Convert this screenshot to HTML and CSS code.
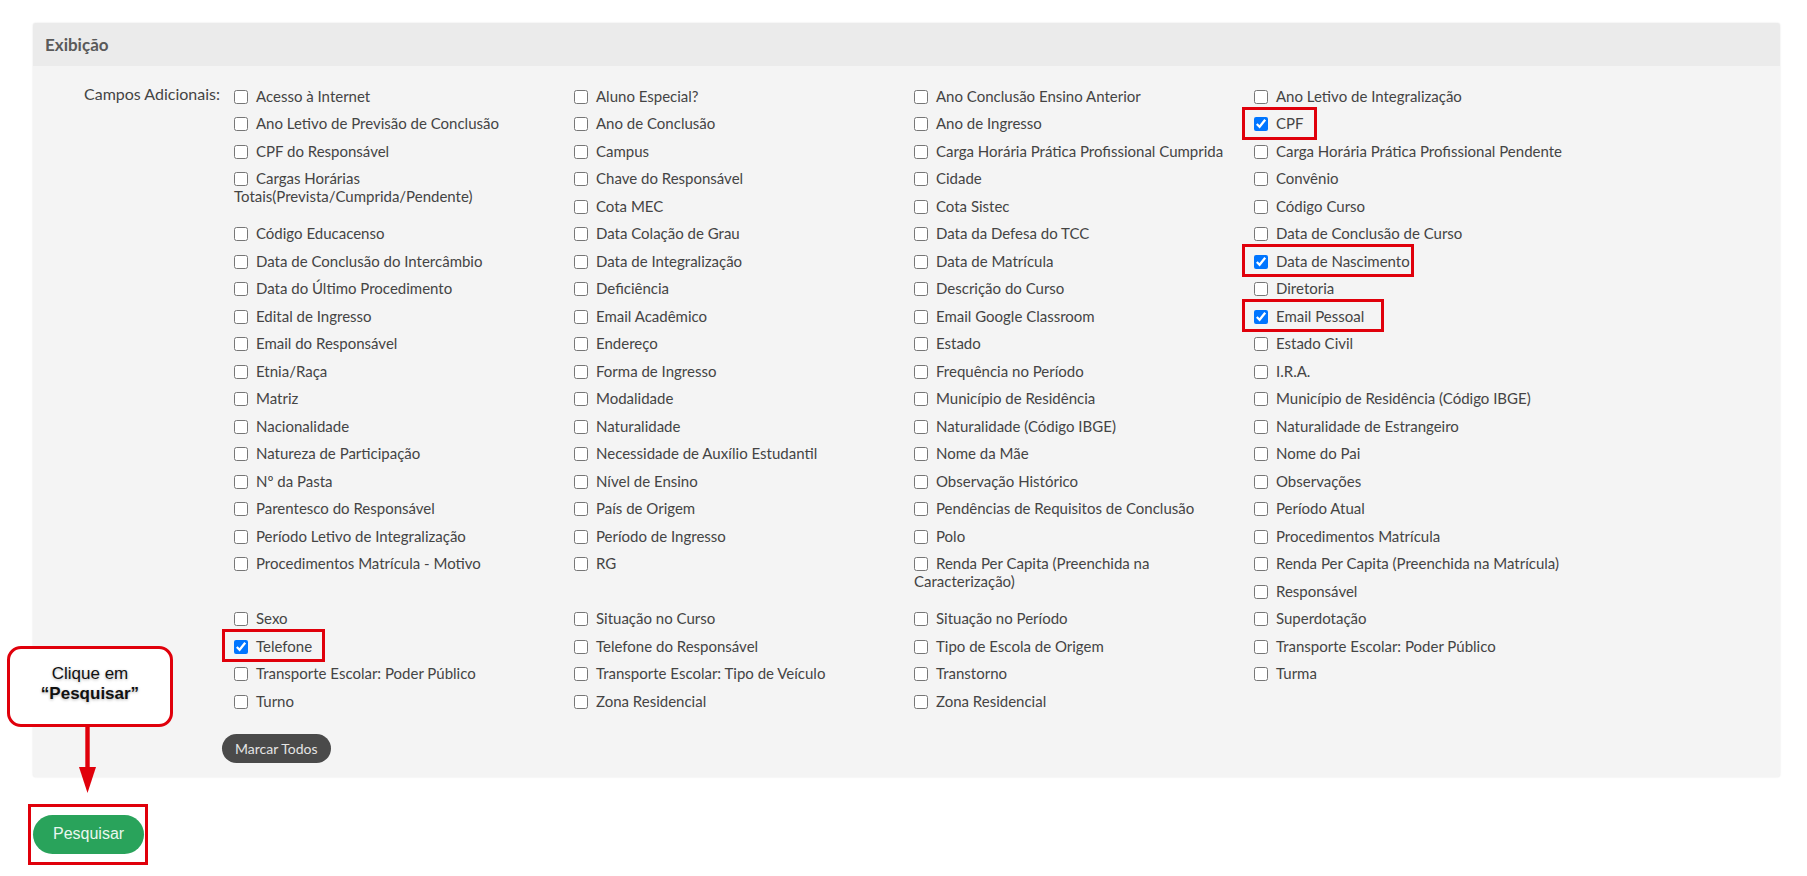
FILE: index.html
```html
<!DOCTYPE html>
<html lang="pt-BR">
<head>
<meta charset="utf-8">
<title>Exibição</title>
<link rel="stylesheet" href="styles.css">
</head>
<body>
<main class="page">
  <section class="panel">
    <header class="panel-header">Exibição</header>
    <div class="panel-body">
      <div class="field-label">Campos Adicionais:</div>
      <div class="field-control">
        <div class="options">
          <div class="opt"><label><input type="checkbox">Acesso à Internet</label></div>
          <div class="opt"><label><input type="checkbox">Aluno Especial?</label></div>
          <div class="opt"><label><input type="checkbox">Ano Conclusão Ensino Anterior</label></div>
          <div class="opt"><label><input type="checkbox">Ano Letivo de Integralização</label></div>
          <div class="opt"><label><input type="checkbox">Ano Letivo de Previsão de Conclusão</label></div>
          <div class="opt"><label><input type="checkbox">Ano de Conclusão</label></div>
          <div class="opt"><label><input type="checkbox">Ano de Ingresso</label></div>
          <div class="opt hl"><label><input type="checkbox" checked>CPF</label></div>
          <div class="opt"><label><input type="checkbox">CPF do Responsável</label></div>
          <div class="opt"><label><input type="checkbox">Campus</label></div>
          <div class="opt"><label><input type="checkbox">Carga Horária Prática Profissional Cumprida</label></div>
          <div class="opt"><label><input type="checkbox">Carga Horária Prática Profissional Pendente</label></div>
          <div class="opt"><label><input type="checkbox">Cargas Horárias Totais(Prevista/Cumprida/Pendente)</label></div>
          <div class="opt"><label><input type="checkbox">Chave do Responsável</label></div>
          <div class="opt"><label><input type="checkbox">Cidade</label></div>
          <div class="opt"><label><input type="checkbox">Convênio</label></div>
          <div class="opt"><label><input type="checkbox">Cota MEC</label></div>
          <div class="opt"><label><input type="checkbox">Cota Sistec</label></div>
          <div class="opt"><label><input type="checkbox">Código Curso</label></div>
          <div class="opt"><label><input type="checkbox">Código Educacenso</label></div>
          <div class="opt"><label><input type="checkbox">Data Colação de Grau</label></div>
          <div class="opt"><label><input type="checkbox">Data da Defesa do TCC</label></div>
          <div class="opt"><label><input type="checkbox">Data de Conclusão de Curso</label></div>
          <div class="opt"><label><input type="checkbox">Data de Conclusão do Intercâmbio</label></div>
          <div class="opt"><label><input type="checkbox">Data de Integralização</label></div>
          <div class="opt"><label><input type="checkbox">Data de Matrícula</label></div>
          <div class="opt hl hl-tight"><label><input type="checkbox" checked>Data de Nascimento</label></div>
          <div class="opt"><label><input type="checkbox">Data do Último Procedimento</label></div>
          <div class="opt"><label><input type="checkbox">Deficiência</label></div>
          <div class="opt"><label><input type="checkbox">Descrição do Curso</label></div>
          <div class="opt"><label><input type="checkbox">Diretoria</label></div>
          <div class="opt"><label><input type="checkbox">Edital de Ingresso</label></div>
          <div class="opt"><label><input type="checkbox">Email Acadêmico</label></div>
          <div class="opt"><label><input type="checkbox">Email Google Classroom</label></div>
          <div class="opt hl hl-wide"><label><input type="checkbox" checked>Email Pessoal</label></div>
          <div class="opt"><label><input type="checkbox">Email do Responsável</label></div>
          <div class="opt"><label><input type="checkbox">Endereço</label></div>
          <div class="opt"><label><input type="checkbox">Estado</label></div>
          <div class="opt"><label><input type="checkbox">Estado Civil</label></div>
          <div class="opt"><label><input type="checkbox">Etnia/Raça</label></div>
          <div class="opt"><label><input type="checkbox">Forma de Ingresso</label></div>
          <div class="opt"><label><input type="checkbox">Frequência no Período</label></div>
          <div class="opt"><label><input type="checkbox">I.R.A.</label></div>
          <div class="opt"><label><input type="checkbox">Matriz</label></div>
          <div class="opt"><label><input type="checkbox">Modalidade</label></div>
          <div class="opt"><label><input type="checkbox">Município de Residência</label></div>
          <div class="opt"><label><input type="checkbox">Município de Residência (Código IBGE)</label></div>
          <div class="opt"><label><input type="checkbox">Nacionalidade</label></div>
          <div class="opt"><label><input type="checkbox">Naturalidade</label></div>
          <div class="opt"><label><input type="checkbox">Naturalidade (Código IBGE)</label></div>
          <div class="opt"><label><input type="checkbox">Naturalidade de Estrangeiro</label></div>
          <div class="opt"><label><input type="checkbox">Natureza de Participação</label></div>
          <div class="opt"><label><input type="checkbox">Necessidade de Auxílio Estudantil</label></div>
          <div class="opt"><label><input type="checkbox">Nome da Mãe</label></div>
          <div class="opt"><label><input type="checkbox">Nome do Pai</label></div>
          <div class="opt"><label><input type="checkbox">Nº da Pasta</label></div>
          <div class="opt"><label><input type="checkbox">Nível de Ensino</label></div>
          <div class="opt"><label><input type="checkbox">Observação Histórico</label></div>
          <div class="opt"><label><input type="checkbox">Observações</label></div>
          <div class="opt"><label><input type="checkbox">Parentesco do Responsável</label></div>
          <div class="opt"><label><input type="checkbox">País de Origem</label></div>
          <div class="opt"><label><input type="checkbox">Pendências de Requisitos de Conclusão</label></div>
          <div class="opt"><label><input type="checkbox">Período Atual</label></div>
          <div class="opt"><label><input type="checkbox">Período Letivo de Integralização</label></div>
          <div class="opt"><label><input type="checkbox">Período de Ingresso</label></div>
          <div class="opt"><label><input type="checkbox">Polo</label></div>
          <div class="opt"><label><input type="checkbox">Procedimentos Matrícula</label></div>
          <div class="opt"><label><input type="checkbox">Procedimentos Matrícula - Motivo</label></div>
          <div class="opt"><label><input type="checkbox">RG</label></div>
          <div class="opt"><label><input type="checkbox">Renda Per Capita (Preenchida na Caracterização)</label></div>
          <div class="opt"><label><input type="checkbox">Renda Per Capita (Preenchida na Matrícula)</label></div>
          <div class="opt"><label><input type="checkbox">Responsável</label></div>
          <div class="opt"><label><input type="checkbox">Sexo</label></div>
          <div class="opt"><label><input type="checkbox">Situação no Curso</label></div>
          <div class="opt"><label><input type="checkbox">Situação no Período</label></div>
          <div class="opt"><label><input type="checkbox">Superdotação</label></div>
          <div class="opt hl"><label><input type="checkbox" checked>Telefone</label></div>
          <div class="opt"><label><input type="checkbox">Telefone do Responsável</label></div>
          <div class="opt"><label><input type="checkbox">Tipo de Escola de Origem</label></div>
          <div class="opt"><label><input type="checkbox">Transporte Escolar: Poder Público</label></div>
          <div class="opt"><label><input type="checkbox">Transporte Escolar: Poder Público</label></div>
          <div class="opt"><label><input type="checkbox">Transporte Escolar: Tipo de Veículo</label></div>
          <div class="opt"><label><input type="checkbox">Transtorno</label></div>
          <div class="opt"><label><input type="checkbox">Turma</label></div>
          <div class="opt"><label><input type="checkbox">Turno</label></div>
          <div class="opt"><label><input type="checkbox">Zona Residencial</label></div>
          <div class="opt"><label><input type="checkbox">Zona Residencial</label></div>
        </div>
        <button type="button" class="btn-dark">Marcar Todos</button>
      </div>
    </div>
  </section>
  <div class="actions">
    <div class="mark"><button type="submit" class="btn-success">Pesquisar</button></div>
  </div>
</main>

<div class="callout">Clique em<br><b>“Pesquisar”</b></div>
<svg class="arrow" width="19" height="70" viewBox="0 0 19 70" aria-hidden="true">
  <rect x="7.3" y="0" width="4.4" height="46" fill="#e0000b"/>
  <polygon points="1,42 18,42 9.5,68" fill="#e0000b"/>
</svg>
</body>
</html>
```

FILE: styles.css
```css
* {
  box-sizing: border-box;
}

body {
  margin: 0;
  font-family: Lato, "Open Sans", "Liberation Sans", sans-serif;
  color: #444;
  background: #fff;
}

.page {
  padding: 23px 27px 12px 33px;
}

.panel {
  background: #f4f4f4;
  border-radius: 3px;
  box-shadow: 0 0 2px rgba(0, 0, 0, 0.12);
}

.panel-header {
  height: 43px;
  padding-left: 12px;
  background: #ebebeb;
  border-radius: 3px 3px 0 0;
  font-size: 17px;
  font-weight: 700;
  line-height: 43px;
  color: #5a5a5a;
}

.panel-body {
  display: flex;
  padding: 16px 0 13.5px;
}

.field-label {
  flex: none;
  width: 189px;
  padding: 3px 2px 0 0;
  text-align: right;
  font-size: 16px;
  line-height: 18px;
}

.field-control {
  flex: none;
  width: 1360px;
}

.options {
  display: flow-root;
}

.opt {
  float: left;
  width: 25%;
  padding: 4.75px 0 4.75px 12px;
  font-size: 15px;
  line-height: 18px;
}

.opt input {
  width: 14px;
  height: 14px;
  margin: 0 8px 0 0;
  vertical-align: -2px;
}

.hl label {
  position: relative;
  display: inline-block;
}

.hl label::after {
  content: "";
  position: absolute;
  left: -12px;
  right: -13px;
  top: -7.5px;
  bottom: -7.5px;
  border: 3px solid #e0000b;
}

.hl-tight label::after {
  right: -4px;
}

.hl-wide label::after {
  right: -20px;
}

.btn-dark {
  display: block;
  margin-top: 19.5px;
  height: 29px;
  padding: 0 13px;
  border: 0;
  border-radius: 15px;
  background: #4a4a4a;
  color: #e4e4e4;
  font-family: Lato, sans-serif;
  font-size: 14px;
}

.actions {
  margin: 27px 0 0 -5px;
}

.mark {
  display: inline-block;
  vertical-align: top;
  padding: 8px 1px 8px 2px;
  border: 3px solid #e0000b;
}

.btn-success {
  display: block;
  height: 39px;
  padding: 0 20px;
  border: 0;
  border-radius: 20px;
  background: #29a35b;
  color: #eaf7ef;
  font-family: "Liberation Sans", Arial, sans-serif;
  font-size: 16px;
}

.callout {
  position: absolute;
  left: 7px;
  top: 646px;
  width: 166px;
  height: 81px;
  padding-top: 15px;
  border: 3.5px solid #e0000b;
  border-radius: 14px;
  background: #fff;
  text-align: center;
  font-family: "Liberation Sans", Arial, sans-serif;
  font-size: 17px;
  line-height: 20px;
  color: #111;
  text-shadow: 0 1px 3px rgba(0, 0, 0, 0.3);
}

.arrow {
  position: absolute;
  left: 78px;
  top: 725px;
}
```
